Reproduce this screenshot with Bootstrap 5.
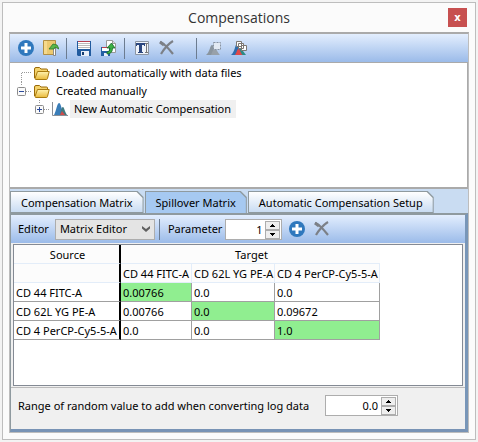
<!DOCTYPE html>
<html lang="en">
<head>
<meta charset="utf-8">
<meta name="viewport" content="width=device-width, initial-scale=1">
<title>Compensations</title>
<link href="https://cdn.jsdelivr.net/npm/bootstrap@5.3.0/dist/css/bootstrap.min.css" rel="stylesheet">
<style>
body{font-family:"Noto Sans","Open Sans",sans-serif;font-size:11px;line-height:18px;color:#000;background:#f3f3f3;padding:2px}
button,input,select{font:inherit;color:inherit}
svg{display:block}
.win{min-height:calc(100vh - 4px);background:#fbfbfb;border:1px solid #bdbdbd;padding:0 6px 6px 6px}
.title-bar{height:29px}
.title-bar h1{font:14px/29px "Open Sans",sans-serif;color:#333;margin:0}
.close-btn{right:2px;top:5px;width:19px;height:19px;background:#c75050;color:#fff;border:0;padding:0;font:bold 10px/17px "DejaVu Sans",sans-serif}
.frame{border:1px solid #bdbdbd;border-top:2px solid #aaa}
.tools{background:linear-gradient(#e3eefe,#9bbbe9);height:28px;padding-left:7px}
.tool-btn{border:0;background:none;padding:0;width:18px;height:18px;flex:none;display:flex;align-items:center;justify-content:center}
.tool-btn+.tool-btn{margin-left:7px}
.rule{width:1px;height:21px;background:#6c7c90;flex:none;margin:0 8px 0 6px}
.rule.wide-gap{margin-left:20px}
.rule.tight{margin:0 8px 0 4px}
.top-pane{border-right:1px solid #aaa;border-top:1px solid #aaa;border-bottom:2px solid #aaa;background:#fff;min-height:100px}
.tree-list{padding:1px 0 0 6px}
.tree-icon{margin-right:6px}
.peak-icon{margin-right:2px}
.sel{background:#f0f0f0;padding:0 5px 0 4px}
.strip{background:#c9dcf2;padding-top:2px}
.tab-btn{position:relative;isolation:isolate;border:0;background:#8f9a9f;height:22px;padding:1px 11px 0;line-height:20px;margin-right:1px;clip-path:polygon(0 0,calc(100% - 6px) 0,100% 6px,100% 100%,0 100%)}
.tab-btn::before{content:"";position:absolute;z-index:-1;inset:1px 1px 1px 1px;background:linear-gradient(#fff,#c9dcf2);clip-path:polygon(0 0,calc(100% - 6px) 0,100% 6px,100% 100%,0 100%)}
.tab-btn.active::before{background:#a6c9f1;bottom:0}
.lower{border:2px solid #8f9a9f;border-left-width:1px;border-right:3px solid #7896b8;border-bottom:3px solid #7893b5;background:#f0f0f0}
.editor-label{margin-right:6px}
.param-label{margin-right:3px}
.editor-sel{width:100px;height:21px;border:1px solid #adadad;background:#e4e4e4;padding:0 16px 0 4px;appearance:none;border-radius:0;line-height:18px}
.chev{right:5px;top:7px;pointer-events:none}
.spin{height:21px;border:1px solid #adadad;background:#fff;padding:1px}
.spin.param{margin-right:6px}
.spin input{border:0;width:38px;padding:0 3px 0 0;text-align:right;background:none;line-height:17px;height:17px}
.spin.wide input{width:54px}
.spin button{display:flex;align-items:center;justify-content:center;width:15px;height:9px;padding:0;border:1px solid #adadad;background:#eee}
.sheet{margin:1px 2px;border:1px solid #848a94;background:#fff;height:142px}
.matrix{border-collapse:separate;border-spacing:0;table-layout:fixed;width:366px;line-height:17px}
.matrix th,.matrix td{padding:0 0 0 2px;font-weight:400;height:19px;white-space:nowrap}
.matrix thead th{background:#fcfcfc;border-bottom:1px solid #e3edf9}
.matrix thead tr+tr th{border-right:1px solid #e3edf9}
.matrix tbody th,.matrix tbody td{border-bottom:1px solid #a0a0a0}
.matrix tbody td{border-right:1px solid #a0a0a0}
.matrix tr>th:first-child[scope]{border-right:2px solid #000}
.matrix .hit{background:#90ee90}
.foot{border-top:1px solid #bbb;height:42px;padding:0 0 6px 7px}
</style>
</head>
<body>
<svg width="0" height="0" class="position-absolute" aria-hidden="true">
<defs>
<linearGradient id="gold" x2="0" y2="1"><stop stop-color="#fff3b0"/><stop offset="1" stop-color="#e9b93a"/></linearGradient>
<symbol id="plus" viewBox="0 0 16 16"><circle cx="8" cy="8" r="8" fill="#2f78bd"/><path d="M8 3v10M3 8h10" stroke="#fff" stroke-width="3"/></symbol>
<symbol id="cross" viewBox="0 0 16 16"><path d="M1 2C5 3 10 9 14 14M14 1C9 4 5 9 2 14" fill="none" stroke="#7c8087" stroke-width="2.2"/><path d="M1 2l4 3" stroke="#7c8087" stroke-width="3"/></symbol>
<symbol id="folder" viewBox="0 0 16 13"><path d="M.5 11V2Q.5.5 2 .5h3.500L7 2h5.500q1 0 1 1v2" fill="#f4d26a" stroke="#9a6a08"/><path d="M1 11.500L3.500 4.500H15.200L13.500 11.500Q13.300 12.500 12.300 12.500H2Q1 12.500 1 11.500z" fill="url(#gold)" stroke="#a97b10"/></symbol>
<symbol id="peaks" viewBox="0 0 16 14"><path d="M2 13C4 10 5 1 7 1s3 8 5 12z" fill="#3a7db8"/><path d="M8 13c1-6 2-8 3-8s2 5 4 8z" fill="#407a80"/><path d="M8 13l2-4 3 4z" fill="#d04a4a"/><path d="M.5 0v13.500H16" fill="none" stroke="#8a8f96"/></symbol>
<symbol id="minus-box" viewBox="0 0 9 9"><rect x=".5" y=".5" width="8" height="8" rx="1" fill="#fafafa" stroke="#8c8c8c"/><path d="M2 4.500h5" stroke="#2b4a9b"/></symbol>
<symbol id="plus-box" viewBox="0 0 9 9"><rect x=".5" y=".5" width="8" height="8" rx="1" fill="#fafafa" stroke="#8c8c8c"/><path d="M2 4.500h5M4.500 2v5" stroke="#2b4a9b"/></symbol>
<symbol id="up" viewBox="0 0 5 3"><path d="M2 0h1v1h1v1h1v1H0V2h1V1h1z"/></symbol>
<symbol id="down" viewBox="0 0 5 3"><path d="M2 3h1V2h1V1h1V0H0v1h1v1h1z"/></symbol>
</defs>
</svg>
<main class="win d-flex flex-column">
<header class="title-bar position-relative text-center">
<h1>Compensations</h1>
<button class="close-btn position-absolute" aria-label="Close">x</button>
</header>
<div class="frame d-flex flex-column flex-grow-1">
<div class="tools d-flex align-items-center" role="toolbar" aria-label="Compensation tools">
<button class="tool-btn" aria-label="Add"><svg width="16" height="16"><use href="#plus"/></svg></button>
<button class="tool-btn" aria-label="Load"><svg width="16" height="16" viewBox="0 0 16 16"><path d="M.5.5h12v14H.5z" fill="#ecc970" stroke="#b18f45"/><path d="M1 1h3v13H1z" fill="#f5d98c"/><path d="M10.500 8h2v7.500h-2z" fill="#fff" stroke="#777" stroke-width=".8"/><path d="M6 9l4-5 4 1 2 4-4-2-1 2z" fill="#5bb84a" stroke="#2b7a2b" stroke-width=".8"/></svg></button>
<span class="rule"></span>
<button class="tool-btn" aria-label="Save"><svg width="14" height="15" viewBox="0 0 14 15"><path d="M0 0h14v15H1L0 14z" fill="#215b9f"/><path d="M1 0h12v8H1z" fill="#fff"/><path d="M1 .5h12" stroke="#b84050"/><path d="M1 2.500h12M1 4.500h12M1 6.500h12" stroke="#bbb"/><path d="M4 10h8v5H4z" fill="#e8eef8"/><path d="M5 11h2v3H5z" fill="#173d70"/></svg></button>
<button class="tool-btn" aria-label="Save as"><svg width="16" height="16" viewBox="0 0 16 16"><path d="M5.500.5h6l3 3v9h-9z" fill="#fff" stroke="#999"/><path d="M11.500.5v3h3" fill="#ddd" stroke="#999"/><path d="M0 7h9v9H0z" fill="#2460a3"/><path d="M1 7h7v4H1z" fill="#fff"/><path d="M1 7.500h7" stroke="#b84050"/><path d="M3 13h4v3H3z" fill="#e8eef8"/><path d="M6 12q3 0 3-4H6l4.500-5L14 8h-2.500q0 6-5.500 6z" fill="#3cb043" stroke="#17682a" stroke-width=".8"/></svg></button>
<span class="rule"></span>
<button class="tool-btn" aria-label="Rename"><svg width="14" height="14" viewBox="0 0 14 14"><path d="M.5.5h13v13H.5z" fill="#eef3fa" stroke="#8b95a3"/><path d="M1 2h9v3H9V4H7v7h1v1H3v-1h1V4H2v1H1z" fill="#2b477f"/><path d="M10 2.500h3M11.500 2v10M10 11.500h3" stroke="#777"/></svg></button>
<button class="tool-btn" aria-label="Delete"><svg width="16" height="16"><use href="#cross"/></svg></button>
<span class="rule wide-gap"></span>
<button class="tool-btn" aria-label="Select peak"><svg width="16" height="15" viewBox="0 0 16 15"><path d="M0 14C4 11 4 4 6 4S9 10 12 14z" fill="#8a959f"/><path d="M5 14c2-5 3-7 4-7s3 5 5 7z" fill="#98a1aa"/><path d="M7.500 1.500h7v7h-7z" fill="#e3eaf3" stroke="#8793a3" stroke-dasharray="2 1"/></svg></button>
<button class="tool-btn" aria-label="Overlay peaks"><svg width="16" height="15" viewBox="0 0 16 15"><path d="M0 14C4 11 4 3 6 3S9 10 11 14z" fill="#2d6dae"/><path d="M7 14l2-8 6 8z" fill="#2a8a86"/><path d="M4 14c2-3 2-6 3.500-6s2 4 4 6z" fill="#e04848"/><path d="M5.500.5h5v5h-5zM7.500 2.500h5v5h-5zM10.500 4.500h5v5h-5z" fill="#fff" stroke="#7b7773"/></svg></button>
</div>
<section class="top-pane flex-grow-1">
<ul class="tree-list list-unstyled m-0" role="tree">
<li class="d-flex align-items-center" role="treeitem"><svg width="18" height="18"><path d="M5.500 18V8.500H15" fill="none" stroke="#999" stroke-dasharray="1 1"/></svg><svg width="16" height="13" class="tree-icon"><use href="#folder"/></svg>Loaded automatically with data files</li>
<li role="treeitem" aria-expanded="true"><div class="d-flex align-items-center"><svg width="18" height="18"><path d="M5.500 0v4M10 9.500h6" fill="none" stroke="#999" stroke-dasharray="1 1"/><use href="#minus-box" x="1" y="5" width="9" height="9"/></svg><svg width="16" height="13" class="tree-icon"><use href="#folder"/></svg>Created manually</div>
<ul class="list-unstyled m-0 ps-3"><li class="d-flex align-items-center" role="treeitem"><svg width="20" height="18"><path d="M7.500 0v4M12 9.500h6" fill="none" stroke="#999" stroke-dasharray="1 1"/><use href="#plus-box" x="3" y="5" width="9" height="9"/></svg><svg width="16" height="14" class="peak-icon"><use href="#peaks"/></svg><span class="sel">New Automatic Compensation</span></li></ul></li>
</ul>
</section>
<div class="strip d-flex" role="tablist">
<button class="tab-btn" role="tab">Compensation Matrix</button><button class="tab-btn active" role="tab" aria-selected="true">Spillover Matrix</button><button class="tab-btn" role="tab">Automatic Compensation Setup</button>
</div>
<section class="lower" role="tabpanel">
<div class="tools d-flex align-items-center">
<label for="editor" class="editor-label">Editor</label>
<div class="position-relative"><select id="editor" class="editor-sel"><option>Matrix Editor</option></select><svg class="chev position-absolute" width="8" height="6" viewBox="0 0 8 6"><path d="M0 0l4 3 4-3v2.500L4 6 0 2.500z" fill="#606060"/></svg></div>
<span class="rule tight"></span>
<label for="param" class="param-label">Parameter</label>
<div class="spin param d-flex"><input id="param" value="1"><div><button aria-label="Parameter up"><svg width="5" height="3"><use href="#up"/></svg></button><button aria-label="Parameter down"><svg width="5" height="3"><use href="#down"/></svg></button></div></div>
<button class="tool-btn" aria-label="Add parameter"><svg width="16" height="16"><use href="#plus"/></svg></button>
<button class="tool-btn" aria-label="Remove parameter"><svg width="16" height="16"><use href="#cross"/></svg></button>
</div>
<div class="sheet">
<table class="matrix">
<colgroup><col width="107"><col width="71"><col width="83"><col width="105"></colgroup>
<thead>
<tr><th scope="col" class="text-center">Source</th><th colspan="3" class="text-center">Target</th></tr>
<tr><th scope="col"></th><th>CD 44 FITC-A</th><th>CD 62L YG PE-A</th><th>CD 4 PerCP-Cy5-5-A</th></tr>
</thead>
<tbody>
<tr><th scope="row">CD 44 FITC-A</th><td class="hit">0.00766</td><td>0.0</td><td>0.0</td></tr>
<tr><th scope="row">CD 62L YG PE-A</th><td>0.00766</td><td class="hit">0.0</td><td>0.09672</td></tr>
<tr><th scope="row">CD 4 PerCP-Cy5-5-A</th><td>0.0</td><td>0.0</td><td class="hit">1.0</td></tr>
</tbody>
</table>
</div>
<div class="foot d-flex align-items-center">
<label for="range" class="me-3">Range of random value to add when converting log data</label>
<div class="spin wide d-flex"><input id="range" value="0.0"><div><button aria-label="Range up"><svg width="5" height="3"><use href="#up"/></svg></button><button aria-label="Range down"><svg width="5" height="3"><use href="#down"/></svg></button></div></div>
</div>
</section>
</div>
</main>
<script src="https://cdn.jsdelivr.net/npm/bootstrap@5.3.0/dist/js/bootstrap.bundle.min.js"></script>
</body>
</html>
